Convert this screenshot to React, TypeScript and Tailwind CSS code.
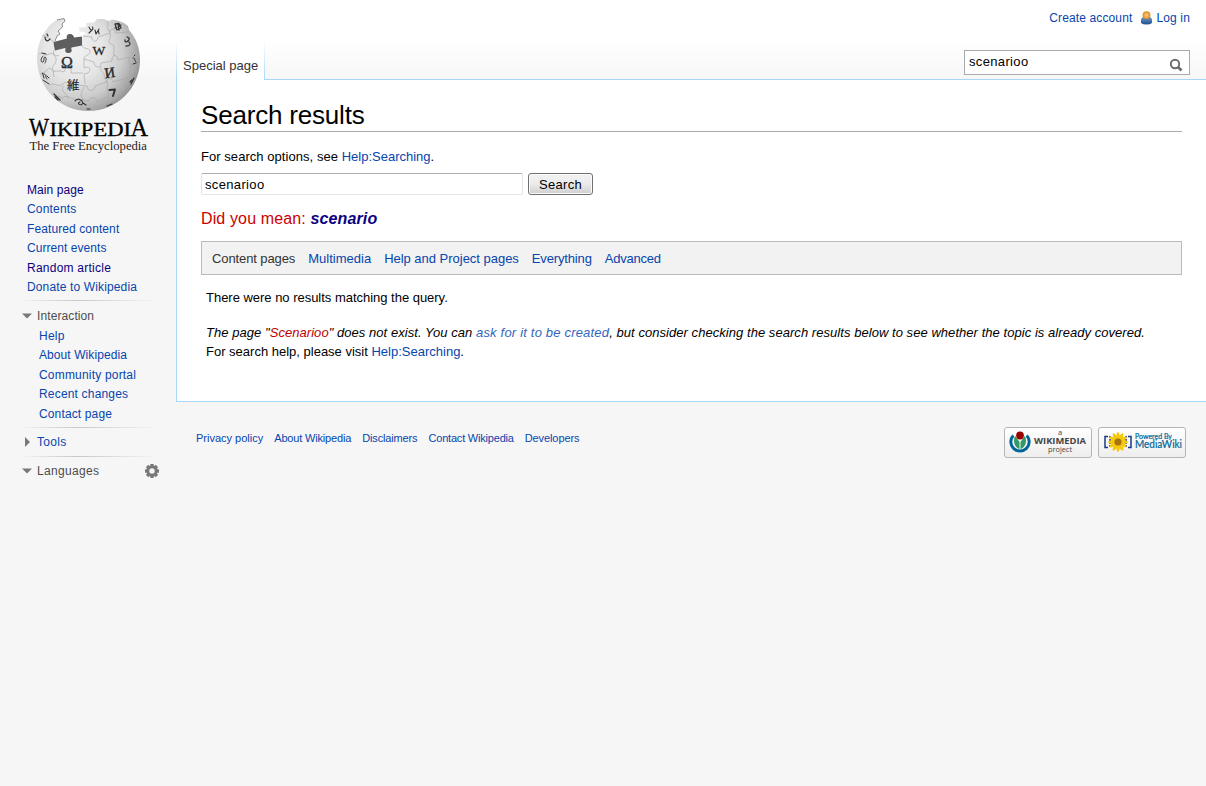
import React from "react";

const link = "text-[#0645ad]";
const ui = "font-['Liberation_Sans',Arial,sans-serif]";

type NavItem = { label: string; cls: string };

const mainNav: NavItem[] = [
  { label: "Main page", cls: "mb-[5px] text-[#0b0080] tracking-[0.08px]" },
  { label: "Contents", cls: "mb-[6px] text-[#0645ad] tracking-[0.18px]" },
  { label: "Featured content", cls: "mb-[5px] text-[#0645ad] tracking-[0.1px]" },
  { label: "Current events", cls: "mb-[6px] text-[#0645ad] tracking-[0.06px]" },
  { label: "Random article", cls: "mb-[5px] text-[#0b0080] tracking-[0.24px]" },
  { label: "Donate to Wikipedia", cls: "text-[#0645ad] tracking-[0.14px]" },
];

const interaction: NavItem[] = [
  { label: "Help", cls: "mb-[5px] tracking-[0.25px]" },
  { label: "About Wikipedia", cls: "mb-[6px] tracking-[0.08px]" },
  { label: "Community portal", cls: "mb-[5px] tracking-[0.19px]" },
  { label: "Recent changes", cls: "mb-[6px] tracking-[0.18px]" },
  { label: "Contact page", cls: "tracking-[0.14px]" },
];

function Globe() {
  return (
    <svg width="122" height="100" viewBox="27 14 122 100" className="block">
      <defs>
        <radialGradient id="ball" gradientUnits="userSpaceOnUse" cx="74" cy="50" r="72">
          <stop offset="0" stopColor="#f2f2f2" />
          <stop offset="0.4" stopColor="#e6e6e6" />
          <stop offset="0.68" stopColor="#cccccc" />
          <stop offset="0.88" stopColor="#a6a6a6" />
          <stop offset="1" stopColor="#858585" />
        </radialGradient>
      </defs>
      <path
        d="M37 58 C37.500 42 44 28 57 19.500 L60 20 L64 18.500 L65 21 L62 24 L62.500 27 L58 31 L60 34 L57 36 L55 40 L54 43 L66 44 L82 41 L83 35 L86 34 L84 32 L79.500 31.500 L79 27.500 L86 27 L86.500 23 L94 22.500 L97 19 L104 19 L108 21 L113 19.500 L119 21 L124 23 L128 26 L129 30 C136 38 140 48 140 60 C140 88 117 111 88.500 111 C60 111 37 88 37 58 Z"
        fill="url(#ball)"
      />
      <path d="M57 20 L64 18.500 L65 21 L62 24 L62.500 27 L58 31 L60 34 L57 36 L55 41" fill="none" stroke="#8c8c8c" strokeWidth="1" />
      <path
        d="M53.500 42 L67 38.500 C66 36 67.500 34 70 34 C72.500 34 74 36 74 37.500 L82 36.500 L82 45.500 L71.500 47.500 C70.500 49 72.500 50 71.500 51.500 C70 53.500 66.500 53.500 65.500 51.500 C64.500 50 66.500 49 65 48 L55 50.500 C54 47 54 45 53.500 42 Z"
        fill="#5e5e5e"
      />
      <g fill="none" stroke="#a2a2a2" strokeWidth="0.6">
        <path d="M54 50 C52 57 57 56 56 61 C55 66 51 65 53 70 L54 77" />
        <path d="M39 54 C46 52 45 57 49 54 S55 58 59 55" />
        <path d="M42 36 C48 34 46 39 50 39 L54 42" />
        <path d="M40 74 C48 73 47 66 51 69 C54 74 58 69 64 72 C66 65 73 67 71 73 L83 73" />
        <path d="M82 45 C83 50 89 47 90 51 C91 56 84 54 84 59 L84 68 C89 65 92 70 88 73 L84 74 L85 84" />
        <path d="M84 59 L94 62 C94 68 101 69 101 63 L112 61 C111 55 117 53 118 60 L130 57" />
        <path d="M83 36 L92 37 C91 42 98 43 98 37 L110 33 C109 28 115 28 116 33 L128 32" />
        <path d="M110 33 C112 39 106 41 111 44 C116 44 113 52 114 56" />
        <path d="M107 21 C110 25 105 27 110 32" />
        <path d="M50 85 C54 82 58 88 63 84 C67 79 71 86 75 85 L87 86 C87 92 95 92 95 86 L107 82 C107 77 113 78 113 82 L128 78" />
        <path d="M101 66 C99 72 106 73 104 77 L108 84 C105 90 110 92 108 98" />
        <path d="M63 86 C61 93 67 93 68 99 M84 87 C82 93 79 94 83 99 L81 110" />
        <path d="M130 57 C127 62 132 65 130 71 L129 80" />
        <path d="M52 94 L63 98 C67 93 72 101 77 99 L89 101 C90 96 97 97 97 102 L108 97" />
      </g>
      <g fill="#2a2a2a" className="font-['Liberation_Serif','Noto_Sans_CJK_JP',serif]">
        <text x="61" y="68" fontSize="16" stroke="#2a2a2a" strokeWidth="0.4">Ω</text>
        <text x="92.500" y="55" fontSize="13.500" stroke="#2a2a2a" strokeWidth="0.3">W</text>
        <text x="104.500" y="77.500" fontSize="14.500" stroke="#2a2a2a" strokeWidth="0.4" transform="rotate(-8 110 72)">И</text>
        <text x="67" y="90" fontSize="12.500" stroke="#2a2a2a" strokeWidth="0.2">維</text>
      </g>
      <g fill="none" stroke="#333" strokeLinecap="round" strokeLinejoin="round">
        <path d="M109.500 90 L115 89.500 L113 96" strokeWidth="2" />
        <path d="M89 27 C91 32 94 30 92.500 27 M89 33 L92 30 M95 30 L96 34 L99 29 M99 34 L98.500 31" strokeWidth="1.100" />
        <path d="M115 24 L119 23.500 L121 28 L117 30 Z M115 28 L121 25 M118 24 L119 30" strokeWidth="1.300" />
        <path d="M125 40 C124 44 130 41 129 38 M127 37 L129 38 M129 42 C131 44 130 46 126 46" strokeWidth="1.300" />
        <path d="M45 37 C45 41 48 42 50 39 M47 34 L48 36" strokeWidth="1.200" />
        <path d="M42 53 L46 54 M43 56 C40 59 41 63 43 62 C45 60 43 57 45 57 C47 58 46 61 45 63" strokeWidth="1" />
        <path d="M42.500 73 L44 78 M44 74 C47 74 45 78 47 79 M43 80 L49 84 M47 76 L49 78" strokeWidth="1" />
        <path d="M54 94 L60 100 M55 97 L58 100" strokeWidth="1.200" />
        <path d="M75 101 C77 98 82 99 83 103 C81 107 76 103 80 102 M83 103 L86 105" strokeWidth="1.100" />
        <path d="M133 58 C136 58 134 61 136 62 M133 64 L136 63 M134 56 L135 55" strokeWidth="1" />
        <path d="M131 84 L134 78 M130 82 L132 80" strokeWidth="1.200" />
        <path d="M107 106 L112 104 M87 109 L90 109" strokeWidth="1.200" />
      </g>
    </svg>
  );
}

function Logo() {
  return (
    <div className="ml-[27px] mt-[14px] w-[122px]">
      <Globe />
      <svg width="122" height="44" viewBox="27 114 122 44" className="block font-['Liberation_Serif',serif]">
        <g fill="#000" stroke="#000" strokeWidth="0.300">
          <text x="29" y="135.500" fontSize="26" textLength="20" lengthAdjust="spacingAndGlyphs">W</text>
          <text x="49.500" y="135.500" fontSize="18.500" textLength="81.500" lengthAdjust="spacingAndGlyphs">IKIPEDI</text>
          <text x="130.500" y="135.500" fontSize="26" textLength="17.500" lengthAdjust="spacingAndGlyphs">A</text>
        </g>
        <text x="29.500" y="150.200" fontSize="13.300" fill="#222" textLength="117.500" lengthAdjust="spacingAndGlyphs">The Free Encyclopedia</text>
      </svg>
    </div>
  );
}

function Rule() {
  return <div className="ml-[19px] h-px w-[141px] bg-linear-to-r from-transparent via-[#c8c8c8] via-40% to-transparent" />;
}

function Arrow({ open = false }: { open?: boolean }) {
  return (
    <svg width="10" height="10" viewBox="0 0 10 10" className="mr-[5px] shrink-0">
      <path d={open ? "M0 2.500H10L5 7.500Z" : "M3 0V10L8 5Z"} fill="#797979" />
    </svg>
  );
}

function Sidebar() {
  return (
    <aside className="w-[176px] shrink-0 text-[12px] leading-[14px]">
      <Logo />
      <ul className="ml-[27px] mt-[25px]">
        {mainNav.map((n) => (
          <li key={n.label} className={n.cls}>{n.label}</li>
        ))}
      </ul>
      <div className="h-[6px]" />
      <Rule />
      <div className="ml-[22px] mt-2 flex items-center tracking-[0.1px] text-[#4d4d4d]"><Arrow open />Interaction</div>
      <ul className="ml-[39px] mt-[6px] text-[#0645ad]">
        {interaction.map((n) => (
          <li key={n.label} className={n.cls}>{n.label}</li>
        ))}
      </ul>
      <div className="h-[6px]" />
      <Rule />
      <div className="ml-[22px] mt-[7px] flex items-center tracking-[0.3px] text-[#0645ad]"><Arrow />Tools</div>
      <div className="h-[7px]" />
      <Rule />
      <div className="ml-[22px] mt-[7px] flex w-[138px] items-center tracking-[0.33px] text-[#4d4d4d]">
        <Arrow open />Languages
        <svg width="16" height="16" viewBox="-8 -8 16 16" className="-my-px ml-auto">
          <circle r="4.200" fill="none" stroke="#797979" strokeWidth="3" />
          <g fill="#797979">
            {[0, 45, 90, 135, 180, 225, 270, 315].map((a) => (
              <rect key={a} x="-1.700" y="-7" width="3.400" height="3" transform={`rotate(${a})`} />
            ))}
          </g>
        </svg>
      </div>
    </aside>
  );
}

function Header() {
  return (
    <header className="flex h-[80px] flex-col">
      <div className="flex h-[40px] justify-end pr-4 pt-[11px] text-[12px] leading-[14px] text-[#0645ad]">
        <span className="mr-[8px] tracking-[0.12px]">Create account</span>
        <svg width="13" height="14" viewBox="0 0 13 14" className="mr-[3px]">
          <defs>
            <linearGradient id="body" x2="0" y2="1"><stop stopColor="#6c9bd0" /><stop offset="1" stopColor="#204d88" /></linearGradient>
            <radialGradient id="head"><stop stopColor="#ffd37c" /><stop offset="1" stopColor="#d98a20" /></radialGradient>
          </defs>
          <path d="M1 12V9.500Q1 6 4 6H9Q12 6 12 9.500V12Q10 13.500 6.500 13.500T1 12Z" fill="url(#body)" />
          <circle cx="6.500" cy="4.200" r="3.900" fill="url(#head)" />
        </svg>
        <span className="tracking-[0.15px]">Log in</span>
      </div>
      <div className="flex h-[40px]">
        <div className="w-px bg-linear-to-b from-white to-[#a7d7f9]" />
        <div className="w-[87px] bg-white pl-[6px] pt-[18px] text-[13px] leading-[15px] text-[#333]">Special page</div>
        <div className="w-px bg-linear-to-b from-white to-[#a7d7f9]" />
        <div className="flex flex-1 justify-end border-b border-[#a7d7f9] pr-4 pt-[10px]">
          <div className="flex h-[25px] w-[226px] justify-between border border-[#aaa] bg-white pl-1 pr-[6px] text-[13px] leading-[21px]">
            <span className="tracking-[0.35px]">scenarioo</span>
            <svg width="14" height="14" viewBox="0 0 14 14" className="mt-[7px]" fill="none" stroke="#6b6b6b">
              <circle cx="6" cy="6" r="4.200" strokeWidth="1.900" />
              <path d="M9 9L12.500 12.500" strokeWidth="2.600" />
            </svg>
          </div>
        </div>
      </div>
    </header>
  );
}

function Results() {
  return (
    <main className="h-[322px] border-b border-l border-[#a7d7f9] bg-white pl-6 pr-6 pt-[19px] text-[13px] leading-[15px]">
      <h1 className="h-[33px] border-b border-[#aaa] text-[26px] leading-[32px] tracking-[-0.19px]">Search results</h1>
      <p className="mt-[17px] tracking-[0.05px]">For search options, see <span className="tracking-normal text-[#0645ad]">Help:Searching</span>.</p>
      <div className="mt-[9px] flex gap-[5px]">
        <div className="h-[22px] w-[322px] rounded-[2px] border border-[#e3e3eb] border-t-[#abadb3] pl-[3px] leading-[21px]"><span className="tracking-[0.35px]">scenarioo</span></div>
        <button className="h-[22px] w-[65px] rounded-[3px] border border-[#707070] bg-linear-to-b from-[#f2f2f2] via-[#ebebeb] via-50% to-[#cfcfcf] leading-[21px] tracking-[0.3px] shadow-[inset_0_0_0_1px_#fafafa]">Search</button>
      </div>
      <p className="mt-[15px] text-[16px] leading-[18px] tracking-[0.13px] text-[#c00]">Did you mean: <b className="italic text-[#0b0080]">scenario</b></p>
      <nav className="mt-[13px] flex h-[34px] gap-[13px] border border-[#bbb] bg-[#f2f2f2] pl-[10px] leading-[34px] text-[#0645ad]">
        <span className="tracking-[-0.1px] text-[#333]">Content pages</span>
        <span>Multimedia</span>
        <span className="tracking-[-0.02px]">Help and Project pages</span>
        <span className="tracking-[-0.15px]">Everything</span>
        <span className="tracking-[-0.22px]">Advanced</span>
      </nav>
      <p className="ml-[5px] mt-[15px] tracking-[-0.02px]">There were no results matching the query.</p>
      <p className="ml-[5px] mt-[20px] whitespace-nowrap italic tracking-[0.05px]">
        The page "<span className="text-[#ba0000]">Scenarioo</span>" does not exist. You can <span className="tracking-[0.19px] text-[#36b]">ask for it to be created</span>, but consider checking the search results below to see whether the topic is already covered.
      </p>
      <p className="ml-[5px] mt-1">For search help, please visit <span className={link}>Help:Searching</span>.</p>
    </main>
  );
}

const badge = "h-[31px] w-[88px] rounded-[3px] border border-[#b5b5b5] bg-linear-to-b from-white to-[#eee]";

function Footer() {
  return (
    <footer className="flex pl-5 pr-5 pt-[25px] text-[11px] leading-[13px] text-[#0645ad]">
      <div className="mt-[5px] flex flex-1 gap-[11px]">
        <span>Privacy policy</span>
        <span className="tracking-[-0.17px]">About Wikipedia</span>
        <span className="tracking-[-0.14px]">Disclaimers</span>
        <span className="tracking-[-0.2px]">Contact Wikipedia</span>
        <span className="tracking-[-0.1px]">Developers</span>
      </div>
      <div className="flex gap-[6px]">
        <div className={badge}>
          <svg width="86" height="29" viewBox="1 1 86 29">
            <path d="M9.300 8.500 A9.200 9.200 0 1 0 22.700 8.500" fill="none" stroke="#069" strokeWidth="3" />
            <path d="M11.200 9 C8.500 14 10.500 20.500 15.500 22 V15 Z M20.800 9 C23.500 14 21.500 20.500 16.500 22 V15 Z" fill="#396" />
            <circle cx="16" cy="8.500" r="3.900" fill="#900" />
            <g className="font-['Open_Sans',sans-serif]" fill="#444">
              <text x="54" y="8" fontSize="7.500">a</text>
              <text x="30" y="16.700" fontSize="8" fontWeight="700" textLength="52" lengthAdjust="spacingAndGlyphs">WIKIMEDIA</text>
              <text x="44" y="25" fontSize="8" textLength="24" lengthAdjust="spacingAndGlyphs">project</text>
            </g>
          </svg>
        </div>
        <div className={badge}>
          <svg width="86" height="29" viewBox="1 1 86 29">
            <g fill="none" stroke="#1a3a80" strokeWidth="1.500">
              <path d="M10 9.500H7V20.500H10M30 9.500H33V20.500H30" />
              <path d="M12 9V21M28 9V21" strokeDasharray="2 1" />
            </g>
            <g fill="#f6c80c">
              {[0, 30, 60, 90, 120, 150].map((a) => (
                <ellipse key={a} cx="20" cy="15" rx="2.300" ry="10" transform={`rotate(${a} 20 15)`} />
              ))}
            </g>
            <circle cx="20" cy="15" r="3.600" fill="#a57512" />
            <g className="font-['Lato',sans-serif]" fill="#069" stroke="#069" strokeWidth="0.200">
              <text x="37" y="11.500" fontSize="7" textLength="37" lengthAdjust="spacingAndGlyphs">Powered By</text>
              <text x="37" y="21.300" fontSize="10.500" textLength="47" lengthAdjust="spacingAndGlyphs">MediaWiki</text>
            </g>
          </svg>
        </div>
      </div>
    </footer>
  );
}

export default function App() {
  return (
    <div className={`flex h-[786px] w-[1206px] overflow-hidden bg-[#f6f6f6] bg-[linear-gradient(#fff_0px,#fff_40px,#f6f6f6_80px)] text-black ${ui}`}>
      <Sidebar />
      <div className="w-[1030px]">
        <Header />
        <Results />
        <Footer />
      </div>
    </div>
  );
}
